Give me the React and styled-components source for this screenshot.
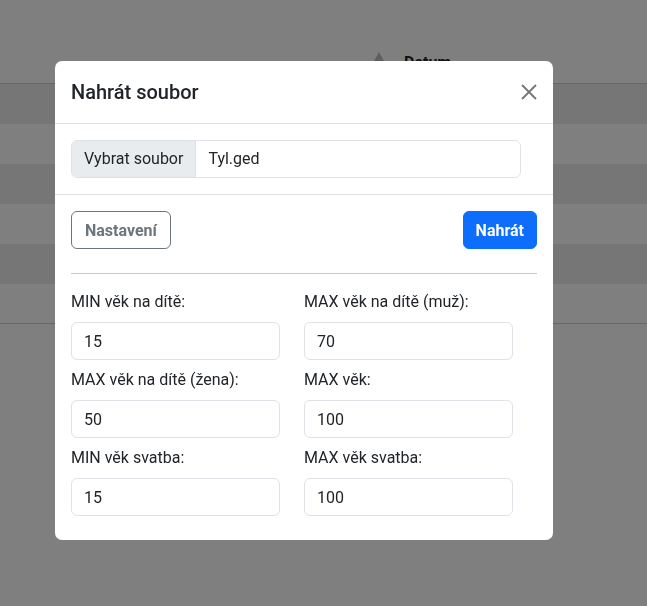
import React from "react";
import styled, { createGlobalStyle } from "styled-components";

const GlobalStyle = createGlobalStyle`
  body {
    margin: 0;
    font-family: Roboto, "Liberation Sans", sans-serif;
    color: #212529;
    background: #fff;
  }
  * { box-sizing: border-box; }
`;

const fields = [
  { label: "MIN věk na dítě:", value: "15" },
  { label: "MAX věk na dítě (muž):", value: "70" },
  { label: "MAX věk na dítě (žena):", value: "50" },
  { label: "MAX věk:", value: "100" },
  { label: "MIN věk svatba:", value: "15" },
  { label: "MAX věk svatba:", value: "100" },
];

const rows = [true, false, true, false, true, false];

const App = () => {
  return (
    <>
      <GlobalStyle />
      <Page>
        <HeadRow>
          <SortArrow />
          <HeadCell>Datum</HeadCell>
        </HeadRow>
        {rows.map((striped, i) => (
          <BodyRow key={i} $striped={striped} />
        ))}
      </Page>

      <Backdrop>
        <Dialog>
          <Header>
            <Title>Nahrát soubor</Title>
            <CloseButton aria-label="Close">
              <svg width="16" height="16" viewBox="0 0 16 16">
                <path d="M1 1L15 15M15 1L1 15" stroke="#757575" strokeWidth="1.8" fill="none" />
              </svg>
            </CloseButton>
          </Header>

          <Section>
            <InputGroup>
              <Addon>Vybrat soubor</Addon>
              <FileName>Tyl.ged</FileName>
            </InputGroup>
          </Section>

          <Body>
            <Actions>
              <Button $variant="outline">Nastavení</Button>
              <Button $variant="primary">Nahrát</Button>
            </Actions>
            <Rule />
            <FormGrid>
              {fields.map((f) => (
                <Field key={f.label}>
                  <Label>{f.label}</Label>
                  <Input defaultValue={f.value} />
                </Field>
              ))}
            </FormGrid>
          </Body>
        </Dialog>
      </Backdrop>
    </>
  );
};

const Page = styled.div`
  padding-top: 42px;
  min-height: 606px;
`;

const HeadRow = styled.div`
  display: flex;
  align-items: center;
  height: 42px;
  border-bottom: 1px solid #cfcfcf;
  padding: 8px 0 8px 374px;
`;

const SortArrow = styled.span`
  width: 0;
  height: 0;
  border-left: 5px solid transparent;
  border-right: 5px solid transparent;
  border-bottom: 9px solid #bdbdbd;
  margin-right: 20px;
  align-self: flex-start;
  margin-top: 2px;
`;

const HeadCell = styled.span`
  font-weight: 700;
  font-size: 16px;
  line-height: 24px;
`;

const BodyRow = styled.div`
  height: 40px;
  background: ${({ $striped }) => ($striped ? "#ececec" : "#fff")};
  &:last-child {
    border-bottom: 1px solid #cfcfcf;
  }
`;

const Backdrop = styled.div`
  position: fixed;
  inset: 0;
  background: rgba(0, 0, 0, 0.5);
  padding: 61px 0 0 55px;
`;

const Dialog = styled.div`
  width: 498px;
  background: #fff;
  border-radius: 7px;
  overflow: hidden;
`;

const Header = styled.div`
  display: flex;
  align-items: center;
  justify-content: space-between;
  padding: 16px;
  border-bottom: 1px solid #dee2e6;
`;

const Title = styled.h5`
  margin: 0;
  font-size: 20px;
  font-weight: 500;
  line-height: 30px;
`;

const CloseButton = styled.button`
  display: flex;
  align-items: center;
  justify-content: center;
  width: 16px;
  height: 16px;
  padding: 0;
  border: 0;
  background: transparent;
  cursor: pointer;
`;

const Section = styled.div`
  padding: 16px;
  border-bottom: 1px solid #dee2e6;
`;

const InputGroup = styled.div`
  display: flex;
  width: 450px;
  height: 38px;
  border: 1px solid #dee2e6;
  border-radius: 6px;
  overflow: hidden;
  font-size: 16px;
  line-height: 24px;
`;

const Addon = styled.span`
  display: flex;
  align-items: center;
  padding: 0 12px;
  background: #e9ecef;
  border-right: 1px solid #dee2e6;
`;

const FileName = styled.span`
  display: flex;
  align-items: center;
  padding: 0 12px;
`;

const Body = styled.div`
  padding: 16px 16px 24px;
`;

const Actions = styled.div`
  display: flex;
  justify-content: space-between;
`;

const Button = styled.button`
  height: 38px;
  padding: 0 ${({ $variant }) => ($variant === "primary" ? "12px" : "13px")};
  border-radius: 6px;
  font-family: inherit;
  font-size: 16px;
  font-weight: 700;
  cursor: pointer;
  border: 1px solid ${({ $variant }) => ($variant === "primary" ? "#0d6efd" : "#6c757d")};
  background: ${({ $variant }) => ($variant === "primary" ? "#0d6efd" : "#fff")};
  color: ${({ $variant }) => ($variant === "primary" ? "#fff" : "#6c757d")};
`;

const Rule = styled.hr`
  margin: 24px 0 16px;
  border: 0;
  border-top: 1px solid #c8c9ca;
`;

const FormGrid = styled.div`
  display: grid;
  grid-template-columns: 209px 209px;
  column-gap: 24px;
  row-gap: 8px;
`;

const Field = styled.div`
  display: flex;
  flex-direction: column;
`;

const Label = styled.label`
  font-size: 16px;
  line-height: 24px;
  margin-bottom: 8px;
`;

const Input = styled.input`
  height: 38px;
  padding: 6px 12px;
  border: 1px solid #dee2e6;
  border-radius: 6px;
  font-family: inherit;
  font-size: 16px;
  color: #212529;
  outline: none;
`;

export default App;
